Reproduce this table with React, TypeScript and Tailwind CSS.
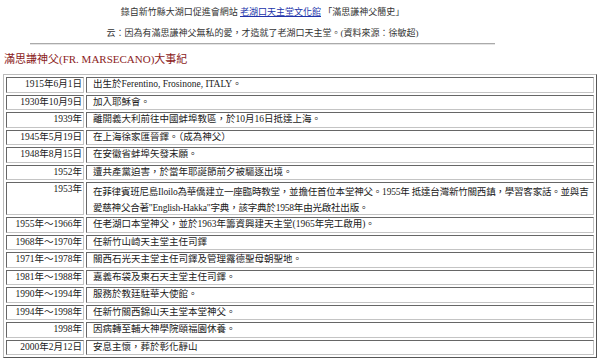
const rows: { date: string; text: React.ReactNode; tall?: boolean }[] = [
  { date: '1915年6月1日', text: '出生於Ferentino, Frosinone, ITALY。' },
  { date: '1930年10月9日', text: '加入耶穌會。' },
  { date: '1939年', text: '離開義大利前往中國蚌埠教區，於10月16日抵達上海。' },
  { date: '1945年5月19日', text: '在上海徐家匯晉鐸。（成為神父）' },
  { date: '1948年8月15日', text: '在安徽省蚌埠矢發末願。' },
  { date: '1952年', text: '遭共產黨迫害，於當年耶誕節前夕被驅逐出境。' },
  {
    date: '1953年',
    tall: true,
    text: (
      <>
        在菲律賓班尼島Iloilo為華僑建立一座臨時教堂，並擔任首位本堂神父。1955年 抵達台灣新竹關西鎮，學習客家話。並與吉
        <br />
        愛慈神父合著"English-Hakka"字典，該字典於1958年由光啟社出版。
      </>
    ),
  },
  { date: '1955年～1966年', text: '任老湖口本堂神父，並於1963年籌資興建天主堂(1965年完工啟用)。' },
  { date: '1968年～1970年', text: '任新竹山崎天主堂主任司鐸' },
  { date: '1971年～1978年', text: '關西石光天主堂主任司鐸及管理露德聖母朝聖地。' },
  { date: '1981年～1988年', text: '嘉義布袋及東石天主堂主任司鐸。' },
  { date: '1990年～1994年', text: '服務於教廷駐華大使館。' },
  { date: '1994年～1998年', text: '任新竹關西錦山天主堂本堂神父。' },
  { date: '1998年', text: '因病轉至輔大神學院頤福園休養。' },
  { date: '2000年2月12日', text: '安息主懷，葬於彰化靜山' },
]

const cell = 'border border-t-[#666] border-l-[#666] border-r-[#c4c4c4] border-b-[#c4c4c4] p-0 whitespace-nowrap'

export default function App() {
  return (
    <div className="w-[600px] h-[358px] overflow-hidden bg-white text-[#1a1a1a] font-['Liberation_Serif','Noto_Sans_CJK_TC',serif]">
      {/* Source note */}
      <div className="w-[525px] pt-[5px] text-center text-[9px] leading-[14px] text-[#333]">
        <p>
          錄自新竹縣大湖口促進會網站 <span className="text-[#2233aa] underline">老湖口天主堂文化館</span> 「滿思謙神父簡史」
        </p>
        <p className="mt-[7px]">云：因為有滿思謙神父無私的愛，才造就了老湖口天主堂。(資料來源：徐敏超)</p>
        <hr className="mt-[3px] mx-[30px] border-0 border-t border-t-[#aaa] border-b border-b-[#e4e4e4]" />
      </div>

      {/* Heading */}
      <h2 className="mt-[7px] pl-[4px] text-[11px] leading-[14px] text-[#8b1c1c]">滿思謙神父(FR. MARSECANO)大事紀</h2>

      {/* Timeline table */}
      <table className="mt-[8px] ml-[3px] w-[594px] table-fixed border-separate border-spacing-[2px] border border-t-[#bbb] border-l-[#bbb] border-r-[#555] border-b-[#555] text-[9.5px]">
        <tbody>
          {rows.map((r, i) => (
            <tr key={r.date}>
              <td className={`${cell} ${i === 0 ? 'w-[78px]' : ''} text-right pr-[1px] align-top`}>
                <div className="h-[13.5px] leading-[13.5px] overflow-visible">{r.date}</div>
              </td>
              <td className={`${cell} pl-[6px] align-top overflow-hidden`}>
                {r.tall ? (
                  <div className="h-[31px] pt-[1px] leading-[16px] tracking-[-0.2px] overflow-visible">{r.text}</div>
                ) : (
                  <div className="h-[13.5px] leading-[13.5px] overflow-visible">{r.text}</div>
                )}
              </td>
            </tr>
          ))}
        </tbody>
      </table>
    </div>
  )
}
